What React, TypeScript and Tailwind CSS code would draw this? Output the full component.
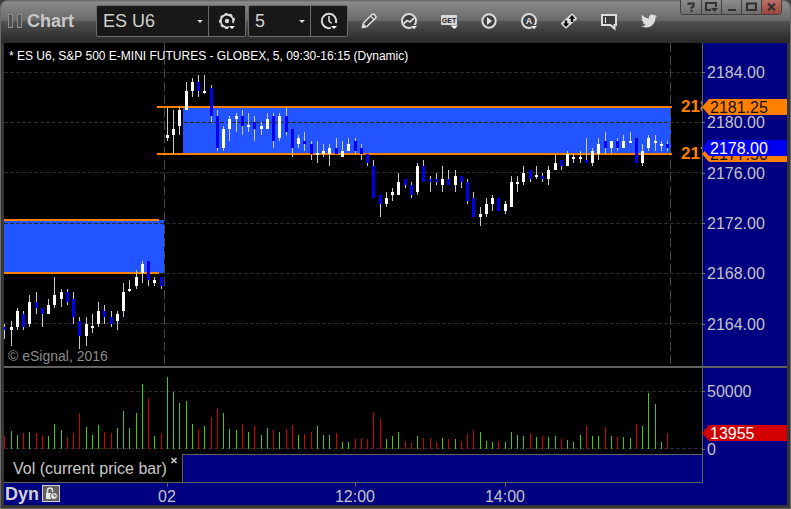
import React, { useState } from "react";
import { FaTwitter } from "react-icons/fa";

type Direction = "up" | "down";

// high, body top, body bottom, low, direction (pane units)
type Candle = [number, number, number, number, Direction];

const candles: Candle[] = [
  [324, 327, 330, 339, "down"], [321, 327, 330, 346, "up"], [308, 311, 327, 330, "up"],
  [311, 314, 327, 330, "down"], [295, 302, 324, 327, "up"], [292, 302, 308, 314, "down"],
  [308, 308, 314, 327, "down"], [299, 305, 314, 314, "up"], [277, 295, 305, 308, "up"],
  [289, 292, 299, 307, "up"], [289, 292, 302, 305, "down"], [292, 299, 317, 324, "down"],
  [317, 321, 336, 349, "down"], [317, 324, 336, 346, "up"], [314, 326, 328, 333, "up"],
  [302, 311, 324, 327, "up"], [305, 311, 317, 324, "down"], [311, 317, 324, 327, "down"],
  [311, 314, 321, 330, "up"], [283, 292, 311, 317, "up"], [280, 289, 291, 292, "up"],
  [270, 277, 286, 289, "up"], [261, 264, 273, 283, "up"], [261, 261, 280, 286, "down"],
  [277, 280, 283, 286, "up"], [277, 277, 286, 289, "down"],
  // second session
  [107, 135, 138, 141, "up"], [110, 129, 135, 154, "up"], [107, 110, 126, 135, "up"],
  [82, 91, 110, 110, "up"], [78, 82, 91, 97, "up"], [75, 82, 91, 97, "down"],
  [75, 91, 93, 94, "up"], [85, 88, 116, 122, "down"], [110, 116, 148, 151, "down"],
  [126, 129, 148, 151, "up"], [116, 119, 129, 141, "up"], [113, 116, 119, 132, "up"],
  [110, 116, 126, 135, "down"], [113, 125, 127, 132, "up"], [116, 122, 129, 141, "down"],
  [122, 126, 129, 135, "up"], [113, 119, 129, 129, "up"], [113, 116, 141, 148, "down"],
  [113, 116, 138, 141, "up"], [107, 116, 132, 135, "down"], [129, 129, 148, 157, "down"],
  [135, 138, 144, 148, "up"], [132, 141, 144, 151, "down"], [141, 144, 154, 160, "down"],
  [141, 153, 155, 163, "up"], [144, 151, 154, 157, "up"], [144, 148, 154, 166, "up"],
  [138, 148, 154, 154, "down"], [141, 151, 157, 157, "up"], [138, 144, 151, 151, "up"],
  [138, 141, 151, 154, "down"], [144, 148, 154, 160, "down"], [154, 154, 163, 166, "down"],
  [160, 166, 198, 198, "down"], [195, 195, 204, 217, "down"], [192, 198, 204, 207, "up"],
  [188, 192, 195, 201, "up"], [173, 182, 195, 195, "up"], [179, 179, 185, 188, "down"],
  [182, 185, 195, 198, "down"], [163, 166, 192, 195, "up"], [160, 166, 182, 182, "down"],
  [176, 179, 182, 192, "down"], [173, 179, 182, 185, "down"], [166, 179, 185, 192, "up"],
  [170, 179, 185, 185, "down"], [170, 176, 185, 192, "up"], [176, 176, 182, 188, "down"],
  [179, 182, 201, 204, "down"], [192, 198, 217, 217, "down"], [207, 214, 217, 226, "up"],
  [198, 204, 214, 217, "up"], [195, 198, 204, 211, "up"], [198, 198, 211, 211, "down"],
  [201, 204, 211, 214, "up"], [176, 182, 207, 207, "up"], [176, 182, 184, 192, "up"],
  [166, 173, 182, 185, "up"], [170, 170, 179, 182, "down"], [166, 175, 177, 179, "up"],
  [173, 176, 179, 182, "down"], [166, 170, 179, 185, "up"], [154, 163, 170, 170, "up"],
  [160, 160, 166, 170, "down"], [151, 154, 166, 166, "up"], [154, 157, 159, 163, "up"],
  [151, 157, 159, 163, "up"], [138, 160, 163, 163, "down"], [148, 151, 163, 166, "up"],
  [138, 144, 154, 160, "up"], [132, 141, 148, 154, "down"], [141, 141, 148, 154, "up"],
  [138, 141, 148, 151, "down"], [135, 141, 148, 148, "up"], [132, 141, 143, 143, "up"],
  [138, 138, 163, 163, "down"], [144, 151, 163, 166, "up"], [135, 138, 148, 151, "up"],
  [135, 141, 143, 151, "up"], [141, 144, 146, 151, "up"], [141, 144, 148, 151, "down"],
];

// bar heights, negative = down volume
const volumes = [
  -13, 18, 14, -16, 17, -16, -13, 13, 25, 19, -12, -16, -36, 22, 14, 24, -17, -16, 21, 38,
  21, 36, 65, -51, 13, -16, 72, 57, 46, 48, 25, -20, 23, -32, -41, 36, 20, 19, -25, 17,
  -23, 14, 21, -19, 17, -20, -24, 14, -15, -17, 23, 14, 14, -16, 7, 7, -10, -11, -10, -37,
  -30, 10, 13, 17, -8, -6, 13, -11, -11, -7, 11, -10, 10, -8, -15, -19, 17, 8, 7, -8,
  7, 17, 14, 13, -16, 12, -13, 12, 13, -10, 9, 7, 14, -23, 13, 13, -22, 13, -12, 12,
  11, -25, 23, 56, 45, 7, -16,
];

const priceTicks = [
  { y: 72, label: "2184.00" },
  { y: 122, label: "2180.00" },
  { y: 173, label: "2176.00" },
  { y: 223, label: "2172.00" },
  { y: 273, label: "2168.00" },
  { y: 324, label: "2164.00" },
];

const barX = (index: number) => Math.floor(4.75 + index * 6.2545);

const GridLine = ({ y }: { y: number }) => (
  <path d={`M4 ${y + 0.5}H702`} stroke="#2b2b2b" strokeDasharray="4 2" />
);

const PricePlot = () => (
  <svg
    className="block h-[323px] w-full"
    viewBox="4 43 698 323"
    preserveAspectRatio="none"
    shapeRendering="crispEdges"
    role="img"
    aria-label="Price chart"
  >
    <rect x="4" y="220" width="160" height="53" fill="#2255ff" />
    <rect x="183" y="107" width="488" height="47" fill="#2255ff" />
    {[72, 122, 172, 223, 273, 323].map((y) => (
      <GridLine key={y} y={y} />
    ))}
    <path d="M164.5 43V364M670.5 43V364" stroke="#484848" strokeDasharray="9 4" />
    <path d="M4 220H159M4 273H159M157 107H672M157 154H672" stroke="#ff8000" strokeWidth="2" />
    {candles.map(([high, top, bottom, low, direction], index) => {
      const x = barX(index);
      return (
        <g key={index}>
          <rect x={x} y={high} width="1" height={low - high} fill="#c8c8c8" />
          <rect
            x={x - 1}
            y={top}
            width="3"
            height={bottom - top}
            fill={direction === "up" ? "#ffffff" : "#0000ee"}
          />
        </g>
      );
    })}
  </svg>
);

const PriceAxis = () => (
  <svg className="block h-[323px] w-[85px]" viewBox="702 43 85 323" fontFamily="'Liberation Sans', Arial, sans-serif" fontSize="16">
    <rect x="702" y="43" width="1" height="323" fill="#606060" />
    {priceTicks.map(({ y, label }) => (
      <g key={label}>
        <rect x="702" y={y} width="3" height="1" fill="#707070" />
        <text x="707" y={y + 6} fill="#c4c4c4">{label}</text>
      </g>
    ))}
    <path d="M702 107L709 99H787V115H709Z" fill="#ff8000" />
    <text x="710" y="113" fill="#101010">2181.25</text>
    <path d="M702 154L709 146H787V162H709Z" fill="#ff8000" />
    <text x="710" y="160" fill="#101010">2177.50</text>
    <path d="M702 148L709 140H787V156H709Z" fill="#0000f0" />
    <text x="710" y="154" fill="#ffffff">2178.00</text>
  </svg>
);

const VolumePlot = () => (
  <svg
    className="block h-[86px] w-full"
    viewBox="4 368 698 86"
    preserveAspectRatio="none"
    shapeRendering="crispEdges"
    role="img"
    aria-label="Volume chart"
  >
    <GridLine y={391} />
    <GridLine y={448} />
    {volumes.map((value, index) => (
      <rect
        key={index}
        x={barX(index)}
        y={449 - Math.abs(value)}
        width="1"
        height={Math.abs(value)}
        fill={value > 0 ? "#44cc00" : "#d40000"}
      />
    ))}
  </svg>
);

const VolumeAxis = () => (
  <svg className="block h-[115px] w-[85px]" viewBox="702 368 85 115" fontFamily="'Liberation Sans', Arial, sans-serif" fontSize="16">
    <rect x="702" y="368" width="1" height="115" fill="#606060" />
    <path d="M702 391.5h3M702 449.5h3" stroke="#707070" />
    <text x="707" y="397" fill="#c4c4c4">50000</text>
    <text x="707" y="455" fill="#c4c4c4">0</text>
    <path d="M702 433L709 425H787V441H709Z" fill="#d40000" />
    <text x="710" y="439" fill="#ffffff">13955</text>
  </svg>
);

const Arrow = () => <path d="M12 15H18L15 18Z" fill="#fff" stroke="none" />;

const Icon = ({ children }: { children: React.ReactNode }) => (
  <svg className="h-5 w-5" viewBox="0 0 20 20" fill="none" stroke="#dcdcdc" strokeWidth="2">
    {children}
  </svg>
);

const SettingsIcon = () => (
  <Icon>
    <path d="M12 16A6.300 6.300 0 1 1 16 12" strokeWidth="1.8" />
    <path d="M11 17.2A7.200 7.200 0 1 1 17 12" strokeWidth="1.6" strokeDasharray="3 2.2" />
    <circle cx="10" cy="10" r="2.2" fill="#dcdcdc" stroke="none" />
    <Arrow />
  </Icon>
);

const ClockIcon = () => (
  <Icon>
    <path d="M12 16.900A7.200 7.200 0 1 1 16.900 12" />
    <path d="M10 5V10L12.5 12.500" strokeWidth="1.6" />
    <Arrow />
  </Icon>
);

const toolIcons = [
  {
    name: "Draw",
    icon: (
      <Icon>
        <path d="M3.5 16.5L4.5 12L13 3.5Q14.5 2.5 16 4T16.5 7L8 15.5Z" fill="#444" strokeWidth="1.7" strokeLinejoin="round" />
        <path d="M11.5 5L15 8.5" strokeWidth="1.2" />
        <path d="M3 17L4.5 12.5L7.5 15.5Z" fill="#dcdcdc" stroke="none" />
      </Icon>
    ),
  },
  {
    name: "Studies",
    icon: (
      <Icon>
        <circle cx="10" cy="10" r="7" fill="#3d3d3d" />
        <path d="M5 12.5L8 9.5L11 11L15 7" strokeWidth="1.800" />
        <path d="M10.500 14H19.500L15 19.500Z" fill="#484848" stroke="none" />
        <Arrow />
      </Icon>
    ),
  },
  {
    name: "Advanced GET",
    icon: (
      <Icon>
        <rect x="2" y="4" width="16" height="10" rx="1" fill="#d8d8d8" stroke="none" />
        <text x="10" y="12" textAnchor="middle" fill="#222" stroke="none" fontFamily="'Liberation Sans', Arial, sans-serif" fontSize="7" fontWeight="bold">
          GET
        </text>
        <path d="M11.500 14.500H19L15.500 18Z" fill="#fff" stroke="none" />
      </Icon>
    ),
  },
  {
    name: "Replay",
    icon: (
      <Icon>
        <circle cx="10" cy="10" r="6.7" fill="#404040" />
        <path d="M8 6L13 10L8 14Z" fill="#e4e4e4" stroke="none" />
      </Icon>
    ),
  },
  {
    name: "Annotate",
    icon: (
      <Icon>
        <circle cx="10" cy="10" r="7" fill="#3d3d3d" />
        <text x="10" y="13" textAnchor="middle" fill="#e4e4e4" stroke="none" fontFamily="'Liberation Sans', Arial, sans-serif" fontSize="9" fontWeight="bold">
          A
        </text>
        <path d="M10.500 14H19.500L15 19.500Z" fill="#484848" stroke="none" />
        <Arrow />
      </Icon>
    ),
  },
  {
    name: "Link",
    icon: (
      <Icon>
        <path d="M13 3.500L17 7.500L7 16.500L3 12.500Z" fill="#dcdcdc" strokeWidth="2" strokeLinejoin="round" />
        <path d="M5.800 9.500H8.200V12.500H10.200L7 16L3.800 12.500H5.800ZM11.800 11V7.800H9.800L13 4L16.200 7.800H14.200V11Z" fill="#050505" stroke="none" />
      </Icon>
    ),
  },
  {
    name: "Note",
    icon: (
      <Icon>
        <path d="M3 4H17V14H15.500V17.500L11.500 14H3Z" fill="#3d3d3d" />
        <path d="M6.500 6.500V12" stroke="#fff" strokeWidth="1" />
      </Icon>
    ),
  },
  { name: "Twitter", icon: <FaTwitter className="h-4 w-4 text-[#dcdcdc]" /> },
];

const windowButtons = [
  { name: "Help", path: "M7 5V3.5H12V6.5L10 7.5V9M9 11H11" },
  { name: "Dock", path: "M9 10H4V3H14V7" },
  { name: "Minimize", path: "M6 10H14" },
  { name: "Maximize", path: "M5 3.5H14V10H5Z" },
  { name: "Close", path: "M6 3.5L13 10.5M13 3.5L6 10.5" },
];

interface PickerProps {
  label: string;
  value: string;
  options: string[];
  onChange: (value: string) => void;
  className: string;
}

const Picker = ({ label, value, options, onChange, className }: PickerProps) => (
  <div className={`relative ${className}`}>
    <select
      aria-label={label}
      value={value}
      onChange={(e) => onChange(e.target.value)}
      className="h-full w-full appearance-none bg-transparent pl-1.5 text-lg leading-6 text-[#d0d0d0] outline-none"
    >
      {options.map((option) => (
        <option key={option}>{option}</option>
      ))}
    </select>
    <svg className="pointer-events-none absolute top-3.5 right-1 h-1 w-2" viewBox="0 0 8 4">
      <path d="M1 0H7L4 3Z" fill="#d8d8d8" />
    </svg>
  </div>
);

const groupClass = "flex h-8 rounded-xs border border-[#6c6c6c] bg-[#181818]";
const groupButton = "flex items-center justify-center border-l border-[#6c6c6c]";

const TitleBar = () => {
  const [symbol, setSymbol] = useState("ES U6");
  const [interval, setInterval] = useState("5");

  return (
    <header className="flex h-[43px] items-center bg-[linear-gradient(#606060_0px,#8a8a8a_2px,#686868_21px,#525252_21px,#2c2c2c_40px)] pb-[2px] pl-[7px]">
      <div className="flex gap-1">
        <i className="h-3.5 w-[5px] border border-[#8c8c8c] bg-[#505050]" />
        <i className="h-3.5 w-[5px] border border-[#8c8c8c] bg-[#505050]" />
      </div>
      <h1 className="w-[74px] pl-[5px] text-lg font-bold text-[#c8c8c8]">Chart</h1>
      <div className={groupClass}>
        <Picker label="Symbol" value={symbol} options={["ES U6", "NQ U6", "YM U6"]} onChange={setSymbol} className="w-[111px]" />
        <button type="button" aria-label="Symbol settings" className={`w-[37px] ${groupButton}`}>
          <SettingsIcon />
        </button>
      </div>
      <div className={`ml-[2px] ${groupClass}`}>
        <Picker label="Interval" value={interval} options={["1", "5", "15", "60"]} onChange={setInterval} className="w-[61px]" />
        <button type="button" aria-label="Time template" className={`w-[37px] ${groupButton}`}>
          <ClockIcon />
        </button>
      </div>
      <nav className="ml-px flex">
        {toolIcons.map(({ name, icon }) => (
          <button key={name} type="button" aria-label={name} className="flex h-8 w-10 items-center justify-center">
            {icon}
          </button>
        ))}
      </nav>
      <div className="mr-2 ml-auto flex self-start overflow-hidden rounded-b-sm border border-t-0 border-[#404040]">
        {windowButtons.map(({ name, path }) => (
          <button
            key={name}
            type="button"
            aria-label={name}
            className={`h-3.5 w-5 not-first:border-l not-first:border-[#404040] ${
              name === "Close"
                ? "bg-[linear-gradient(#b87068,#a04438)]"
                : "bg-[linear-gradient(#8c8c8c,#6e6e6e)]"
            }`}
          >
            <svg className="block h-3.5 w-full" viewBox="0 0 19 14" fill="none" stroke="#303030" strokeWidth="2">
              <path d={path} />
              {name === "Dock" && <path d="M9 8H16L12.5 12Z" fill="#303030" stroke="none" />}
            </svg>
          </button>
        ))}
      </div>
    </header>
  );
};

const VolumeTab = () => (
  <div className="flex h-[29px] border-b border-[#606060]">
    <div className="relative w-[178px] bg-black pt-[5px] pl-[9px] text-base leading-5 text-[#c8c8c8]">
      Vol (current price bar)
      <button type="button" aria-label="Close study" className="absolute top-0.5 right-1 h-2 w-2">
        <svg className="block h-2 w-2" viewBox="0 0 8 8" stroke="#d0d0d0" strokeWidth="1.5">
          <path d="M1.5 2L6.5 7M6.5 2L1.5 7" />
        </svg>
      </button>
    </div>
    <div className="flex-1 border-t border-l border-[#606060]" />
  </div>
);

const TimeAxis = () => (
  <footer className="flex h-[22px] items-start text-base leading-6 text-[#c4c4c4]">
    <strong className="w-[38px] pl-px text-lg leading-[22px] text-[#d0d0d0]">Dyn</strong>
    <button type="button" aria-label="Lock time range" className="mt-0.5 h-[17px] w-[18px] border border-[#d0d0d0] bg-[#606060]">
      <svg className="block h-full w-full" viewBox="0 0 16 15" fill="none" stroke="#e4e4e4">
        <path d="M4.5 7V4.5Q4.5 2 7 2T9.5 4.5V6" strokeWidth="1.5" />
        <path d="M3 7H9V13H3Z" fill="#e4e4e4" stroke="none" />
        <circle cx="11" cy="10" r="3.5" fill="#e4e4e4" stroke="#606060" />
        <path d="M11 8V10H13" stroke="#505050" />
      </svg>
    </button>
    <TimeLabel className="ml-[87px] w-10">02</TimeLabel>
    <TimeLabel className="ml-[136px] w-16">12:00</TimeLabel>
    <TimeLabel className="ml-[86px] w-16">14:00</TimeLabel>
  </footer>
);

const TimeLabel = ({ className, children }: { className: string; children: React.ReactNode }) => (
  <span
    className={`bg-[linear-gradient(#606060,#606060)] bg-[length:1px_4px] bg-top bg-no-repeat pt-[2px] text-center ${className}`}
  >
    {children}
  </span>
);

const LevelLabel = ({ className, children }: { className: string; children: string }) => (
  <span className={`absolute right-0 w-[21px] overflow-hidden text-[17px] leading-5 font-bold text-[#ff8000] ${className}`}>
    {children}
  </span>
);

const App = () => {
  return (
    <div className="bg-[#404040] font-['Liberation_Sans',Arial,sans-serif]">
      <div className="overflow-hidden rounded-t-lg border-x border-b border-[#6a6a6a] bg-[#363636]">
        <TitleBar />
        <main className="mx-[3px] mb-[3px] bg-[#000080]">
          <section className="flex border-b-2 border-[#606060]">
            <div className="relative flex-1 bg-black">
              <PricePlot />
              <p className="absolute top-1 left-[5px] text-xs leading-[18px] text-white">
                * ES U6, S&amp;P 500 E-MINI FUTURES - GLOBEX, 5, 09:30-16:15 (Dynamic)
              </p>
              <LevelLabel className="top-[54px]">2181.25</LevelLabel>
              <LevelLabel className="top-[101px]">2177.50</LevelLabel>
              <p className="absolute bottom-0 left-1 text-sm leading-5 text-[#8c8c8c]">© eSignal, 2016</p>
            </div>
            <PriceAxis />
          </section>
          <section className="flex">
            <div className="flex-1">
              <div className="bg-black">
                <VolumePlot />
              </div>
              <VolumeTab />
            </div>
            <VolumeAxis />
          </section>
          <TimeAxis />
        </main>
      </div>
    </div>
  );
};

export default App;
